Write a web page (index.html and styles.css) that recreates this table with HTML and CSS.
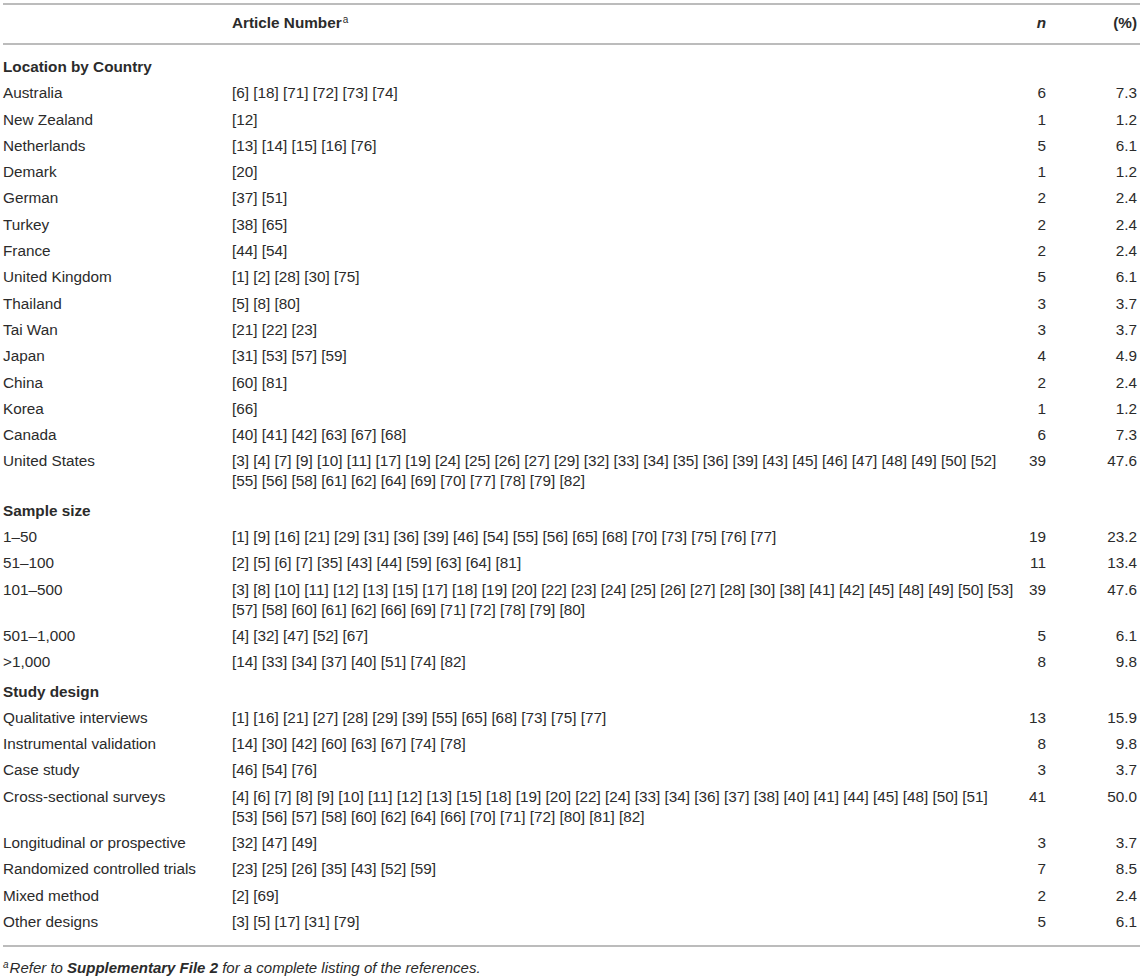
FILE: index.html
```html
<!DOCTYPE html>
<html lang="en">
  <head>
    <meta charset="UTF-8" />
    <title>Table 1 | Study characteristics</title>
    <link rel="stylesheet" href="styles.css">
  </head>
  <body>
    <table class="study-table">
      <colgroup>
        <col class="col-label" />
        <col class="col-articles" />
        <col class="col-n" />
        <col class="col-pct" />
      </colgroup>
      <thead>
        <tr>
          <th></th>
          <th>Article Number<sup>a</sup></th>
          <th class="num"><em>n</em></th>
          <th class="num">(%)</th>
        </tr>
      </thead>
      <tbody>
        <tr class="section first">
          <td colspan="4">Location by Country</td>
        </tr>
        <tr><td>Australia</td><td class="refs">[6] [18] [71] [72] [73] [74]</td><td class="num">6</td><td class="num">7.3</td></tr>
        <tr><td>New Zealand</td><td class="refs">[12]</td><td class="num">1</td><td class="num">1.2</td></tr>
        <tr><td>Netherlands</td><td class="refs">[13] [14] [15] [16] [76]</td><td class="num">5</td><td class="num">6.1</td></tr>
        <tr><td>Demark</td><td class="refs">[20]</td><td class="num">1</td><td class="num">1.2</td></tr>
        <tr><td>German</td><td class="refs">[37] [51]</td><td class="num">2</td><td class="num">2.4</td></tr>
        <tr><td>Turkey</td><td class="refs">[38] [65]</td><td class="num">2</td><td class="num">2.4</td></tr>
        <tr><td>France</td><td class="refs">[44] [54]</td><td class="num">2</td><td class="num">2.4</td></tr>
        <tr><td>United Kingdom</td><td class="refs">[1] [2] [28] [30] [75]</td><td class="num">5</td><td class="num">6.1</td></tr>
        <tr><td>Thailand</td><td class="refs">[5] [8] [80]</td><td class="num">3</td><td class="num">3.7</td></tr>
        <tr><td>Tai Wan</td><td class="refs">[21] [22] [23]</td><td class="num">3</td><td class="num">3.7</td></tr>
        <tr><td>Japan</td><td class="refs">[31] [53] [57] [59]</td><td class="num">4</td><td class="num">4.9</td></tr>
        <tr><td>China</td><td class="refs">[60] [81]</td><td class="num">2</td><td class="num">2.4</td></tr>
        <tr><td>Korea</td><td class="refs">[66]</td><td class="num">1</td><td class="num">1.2</td></tr>
        <tr><td>Canada</td><td class="refs">[40] [41] [42] [63] [67] [68]</td><td class="num">6</td><td class="num">7.3</td></tr>
        <tr>
          <td>United States</td>
          <td class="refs">[3] [4] [7] [9] [10] [11] [17] [19] [24] [25] [26] [27] [29] [32] [33] [34] [35] [36] [39] [43] [45] [46] [47] [48] [49] [50] [52]<br>[55] [56] [58] [61] [62] [64] [69] [70] [77] [78] [79] [82]</td>
          <td class="num">39</td><td class="num">47.6</td>
        </tr>

        <tr class="section">
          <td colspan="4">Sample size</td>
        </tr>
        <tr><td>1&ndash;50</td><td class="refs">[1] [9] [16] [21] [29] [31] [36] [39] [46] [54] [55] [56] [65] [68] [70] [73] [75] [76] [77]</td><td class="num">19</td><td class="num">23.2</td></tr>
        <tr><td>51&ndash;100</td><td class="refs">[2] [5] [6] [7] [35] [43] [44] [59] [63] [64] [81]</td><td class="num">11</td><td class="num">13.4</td></tr>
        <tr>
          <td>101&ndash;500</td>
          <td class="refs">[3] [8] [10] [11] [12] [13] [15] [17] [18] [19] [20] [22] [23] [24] [25] [26] [27] [28] [30] [38] [41] [42] [45] [48] [49] [50] [53]<br>[57] [58] [60] [61] [62] [66] [69] [71] [72] [78] [79] [80]</td>
          <td class="num">39</td><td class="num">47.6</td>
        </tr>
        <tr><td>501&ndash;1,000</td><td class="refs">[4] [32] [47] [52] [67]</td><td class="num">5</td><td class="num">6.1</td></tr>
        <tr><td>&gt;1,000</td><td class="refs">[14] [33] [34] [37] [40] [51] [74] [82]</td><td class="num">8</td><td class="num">9.8</td></tr>

        <tr class="section">
          <td colspan="4">Study design</td>
        </tr>
        <tr><td>Qualitative interviews</td><td class="refs">[1] [16] [21] [27] [28] [29] [39] [55] [65] [68] [73] [75] [77]</td><td class="num">13</td><td class="num">15.9</td></tr>
        <tr><td>Instrumental validation</td><td class="refs">[14] [30] [42] [60] [63] [67] [74] [78]</td><td class="num">8</td><td class="num">9.8</td></tr>
        <tr><td>Case study</td><td class="refs">[46] [54] [76]</td><td class="num">3</td><td class="num">3.7</td></tr>
        <tr>
          <td>Cross-sectional surveys</td>
          <td class="refs">[4] [6] [7] [8] [9] [10] [11] [12] [13] [15] [18] [19] [20] [22] [24] [33] [34] [36] [37] [38] [40] [41] [44] [45] [48] [50] [51]<br>[53] [56] [57] [58] [60] [62] [64] [66] [70] [71] [72] [80] [81] [82]</td>
          <td class="num">41</td><td class="num">50.0</td>
        </tr>
        <tr><td>Longitudinal or prospective</td><td class="refs">[32] [47] [49]</td><td class="num">3</td><td class="num">3.7</td></tr>
        <tr><td>Randomized controlled trials</td><td class="refs">[23] [25] [26] [35] [43] [52] [59]</td><td class="num">7</td><td class="num">8.5</td></tr>
        <tr><td>Mixed method</td><td class="refs">[2] [69]</td><td class="num">2</td><td class="num">2.4</td></tr>
        <tr class="last"><td>Other designs</td><td class="refs">[3] [5] [17] [31] [79]</td><td class="num">5</td><td class="num">6.1</td></tr>
      </tbody>
    </table>

    <p class="footnote">
      <sup>a</sup>Refer to <strong>Supplementary File 2</strong> for a complete listing of the references.
    </p>
  </body>
</html>
```

FILE: styles.css
```css
body {
  margin: 0;
  padding: 3px 3px 0;
  font-family: "Liberation Sans", Arial, sans-serif;
  color: #2b2b2b;
  background-color: #fff;
}
.study-table {
  width: 1137px;
  border-collapse: collapse;
  table-layout: fixed;
  font-size: 15.3px;
  line-height: 20px;
  border-top: 2px solid #bcbcbc;
  border-bottom: 2px solid #bcbcbc;
}
.col-label {
  width: 229px;
}
.col-articles {
  width: 770px;
}
.col-n {
  width: 44px;
}
.col-pct {
  width: 94px;
}
th,
td {
  text-align: left;
  vertical-align: top;
  padding: 3px 0 3.3px;
  font-weight: normal;
}
thead th {
  font-weight: bold;
  padding: 8px 0 10px;
  border-bottom: 2px solid #bcbcbc;
}
thead sup {
  font-size: 10px;
  font-weight: normal;
  line-height: 0;
  vertical-align: 5px;
  margin-left: 1px;
}
.refs {
  white-space: nowrap;
}
.num {
  text-align: right;
}
.study-table .num:last-child {
  padding-right: 3px;
}
.section td {
  font-weight: bold;
  padding-top: 6px;
}
.section.first td {
  padding-top: 12px;
}
.last td {
  padding-bottom: 13px;
}
.footnote {
  margin: 12px 0 0;
  font-size: 15px;
  font-style: italic;
  line-height: 18px;
}
.footnote sup {
  font-size: 10px;
  line-height: 0;
  vertical-align: 5px;
  margin-right: 1px;
}
```
